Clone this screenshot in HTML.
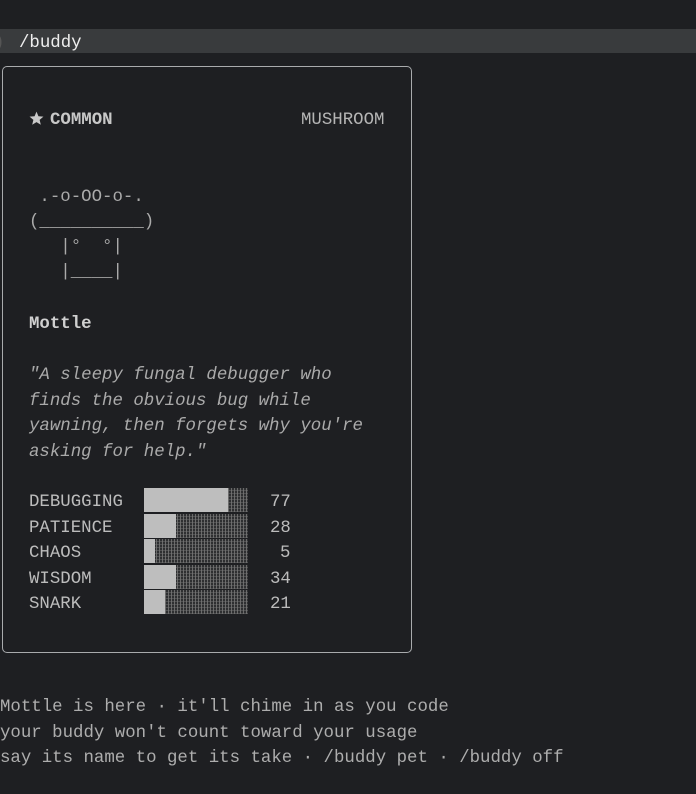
<!DOCTYPE html>
<html><head><meta charset="utf-8"><style>
html,body{margin:0;padding:0;background:#1e1f22;width:696px;height:794px;overflow:hidden}
body{font-family:"Liberation Mono","DejaVu Sans Mono",monospace;font-size:17.4px;color:#bcbcbc;position:relative}
.l{position:absolute;white-space:pre;line-height:20px;margin-top:3px}
.cmd{position:absolute;left:0;top:29px;width:696px;height:24px;background:#393b3d}
.box{position:absolute;left:2px;top:66px;width:408px;height:585px;border:1.5px solid #a9abad;border-radius:5px}
.bar{position:absolute;left:144px;width:104px;height:24px;background:repeating-linear-gradient(90deg,#6a6a6a 0 1px,#2e2f31 1px 3px),#444;}
.bar:after{content:"";position:absolute;inset:0;background:repeating-linear-gradient(0deg,rgba(120,120,120,.45) 0 1px,transparent 1px 3px)}
.bar i{position:absolute;left:0;top:0;bottom:0;background:#bebebe;z-index:1}
</style></head><body>
<div class="cmd"></div>
<div class="l" style="left:-6px;top:31px;color:#555">)</div>
<div class="l" style="left:19px;top:31px;color:#eee">/buddy</div>
<div class="box"></div>
<svg style="position:absolute;left:29px;top:111px" width="15" height="15" viewBox="0 0 24 24"><path d="M12 1l3.1 7.4 8 .6-6.1 5.2 1.9 7.8L12 17.8 5.1 22l1.9-7.8L.9 9l8-.6z" fill="#c8c8c8"/></svg>
<div class="l" style="left:50px;top:108px;font-weight:bold;color:#c8c8c8">COMMON</div>
<div class="l" style="left:301px;top:108px;color:#b5b5b5">MUSHROOM</div>
<div class="l" style="left:29px;top:185px;color:#aaa"> .-o-OO-o-.</div>
<div class="l" style="left:29px;top:210px;color:#aaa">(__________)</div>
<div class="l" style="left:29px;top:235px;color:#aaa">   |°  °|</div>
<div class="l" style="left:29px;top:260px;color:#aaa">   |____|</div>
<div class="l" style="left:29px;top:312px;font-weight:bold;color:#d0d0d0">Mottle</div>
<div class="l" style="left:29px;top:363px;font-style:italic;color:#aaa">"A sleepy fungal debugger who</div>
<div class="l" style="left:29px;top:389px;font-style:italic;color:#aaa">finds the obvious bug while</div>
<div class="l" style="left:29px;top:414px;font-style:italic;color:#aaa">yawning, then forgets why you're</div>
<div class="l" style="left:29px;top:440px;font-style:italic;color:#aaa">asking for help."</div>
<div class="l" style="left:29px;top:490px">DEBUGGING</div><div class="bar" style="top:488px"><i style="width:84px"></i></div><div class="l" style="left:270px;top:490px">77</div>
<div class="l" style="left:29px;top:516px">PATIENCE</div><div class="bar" style="top:514px"><i style="width:32px"></i></div><div class="l" style="left:270px;top:516px">28</div>
<div class="l" style="left:29px;top:541px">CHAOS</div><div class="bar" style="top:539px"><i style="width:11px"></i></div><div class="l" style="left:280px;top:541px">5</div>
<div class="l" style="left:29px;top:567px">WISDOM</div><div class="bar" style="top:565px"><i style="width:32px"></i></div><div class="l" style="left:270px;top:567px">34</div>
<div class="l" style="left:29px;top:592px">SNARK</div><div class="bar" style="top:590px"><i style="width:21px"></i></div><div class="l" style="left:270px;top:592px">21</div>
<div class="l" style="left:0;top:695px;color:#adadad">Mottle is here · it'll chime in as you code</div>
<div class="l" style="left:0;top:721px;color:#adadad">your buddy won't count toward your usage</div>
<div class="l" style="left:0;top:746px;color:#adadad">say its name to get its take · /buddy pet · /buddy off</div>
</body></html>
